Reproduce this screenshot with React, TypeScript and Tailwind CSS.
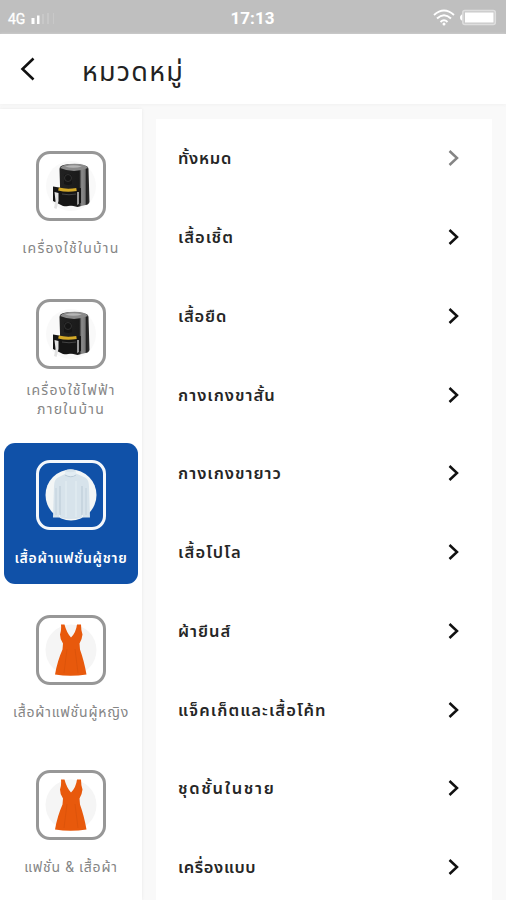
import { clsx } from 'clsx';

type Art = 'fryer' | 'shirt' | 'dress';

const categories: { id: string; lines: string[]; art: Art; box: string; label: string; active?: boolean }[] = [
  { id: 'home', lines: ['เครื่องใช้ในบ้าน'], art: 'fryer', box: 'h-[148px] pt-[42px]', label: 'mt-[18px] tracking-[1.3px]' },
  { id: 'electric', lines: ['เครื่องใช้ไฟฟ้า', 'ภายในบ้าน'], art: 'fryer', box: 'h-[186px] pt-[42px]', label: 'mt-[12px] tracking-[1.3px]' },
  { id: 'men', lines: ['เสื้อผ้าแฟชั่นผู้ชาย'], art: 'shirt', box: 'h-[141px] pt-[17px]', label: 'mt-[19px] font-semibold tracking-[0.75px]', active: true },
  { id: 'women', lines: ['เสื้อผ้าแฟชั่นผู้หญิง'], art: 'dress', box: 'h-[155px] pt-[31px]', label: 'mt-[18px] tracking-[0.8px]' },
  { id: 'fashion', lines: ['แฟชั่น & เสื้อผ้า'], art: 'dress', box: 'h-[155px] pt-[31px]', label: 'mt-[18px] tracking-[0.8px]' },
];

const items = [
  { name: 'ทั้งหมด', tracking: 'tracking-[0.7px]', muted: true },
  { name: 'เสื้อเชิ้ต', tracking: 'tracking-[1px]' },
  { name: 'เสื้อยืด', tracking: 'tracking-[0.8px]' },
  { name: 'กางเกงขาสั้น', tracking: 'tracking-[1px]' },
  { name: 'กางเกงขายาว', tracking: 'tracking-[1px]' },
  { name: 'เสื้อโปโล', tracking: 'tracking-[1.2px]' },
  { name: 'ผ้ายีนส์', tracking: 'tracking-[1px]' },
  { name: 'แจ็คเก็ตและเสื้อโค้ท', tracking: 'tracking-[1.1px]' },
  { name: 'ชุดชั้นในชาย', tracking: 'tracking-[1.7px]' },
  { name: 'เครื่องแบบ', tracking: 'tracking-[0.6px]' },
];

function Fryer() {
  return (
    <svg viewBox="0 0 52 52" className="size-[52px] shrink-0">
      <defs>
        <linearGradient id="fryer-side" x1="0" x2="1">
          <stop offset="0" stopColor="#222" />
          <stop offset=".66" stopColor="#1a1a1a" />
          <stop offset=".74" stopColor="#8c8c8c" />
          <stop offset=".85" stopColor="#777" />
          <stop offset=".9" stopColor="#222" />
          <stop offset="1" stopColor="#333" />
        </linearGradient>
      </defs>
      <circle cx="26" cy="26" r="25" fill="#f9f9f9" />
      <path d="M14.500 9q0-3 4-4 9-2 20 0 5 1 5 4l1 33q-1 3-4 3l-8 2-17-4z" fill="url(#fryer-side)" />
      <path d="M15 8q2-3 9-4 9-1 15 1 3 1 4 3-7 3-14 3t-14-3z" fill="#8a8a8a" />
      <path d="M20 6.500q8-2.500 17 0-9 2.500-17 0z" fill="#b5b5b5" />
      <path d="M19 15q4-2 8 0v9q-4 2-8 0z" fill="#151515" />
      <circle cx="23" cy="18" r="3.500" fill="none" stroke="#383838" strokeWidth=".8" />
      <path d="M8 26.500q14 3 28 1.500v15q-9 4-18 3l-10-5z" fill="#151515" />
      <path d="M13.500 29q8 2 18 .500" fill="none" stroke="#d4a928" strokeWidth="3" />
      <path d="M9.500 32l4 1v8l-2 8-2.500-1 1.500-7z" fill="#e3e3e3" />
      <path d="M32 32h2v12l-2 1z" fill="#999" />
      <path d="M17 34q7 1.500 14 0" fill="none" stroke="#444" />
    </svg>
  );
}

function Shirt() {
  return (
    <svg viewBox="0 0 52 52" className="size-[52px] shrink-0">
      <circle cx="26" cy="26" r="25.500" fill="#f3f6f6" />
      <path d="M20 1.500q5-2.500 11 0v3l9 4q4 2 4 9l1 31h-7l-1-6v6q-11 3-22 0v-6l-1 6H8l1-31q0-7 4-9l8-4z" fill="#d7e3eb" />
      <path d="M20 2q5 2.500 11 0v4q-6 3-11 0z" fill="#e3edf3" />
      <path d="M20 6q6 3.500 11 0M15 17v29M37 17v29" fill="none" stroke="#b5c6d2" strokeWidth=".9" />
      <path d="M21 12v36M31 12v36" stroke="#e1ebf1" strokeWidth="1.500" />
      <path d="M11 19v27M41 19v27" stroke="#c2d1dc" />
    </svg>
  );
}

function Dress() {
  return (
    <svg viewBox="0 0 52 52" className="size-[52px] shrink-0">
      <circle cx="26" cy="26" r="25.500" fill="#f5f5f5" />
      <path d="M16 .500h3.500q2 8 6.500 13 5-5 6-13h4q0 6 1.500 10-.5 5-3 9l.5 6q4 11 6.500 25-16 2.500-31.500 0 2.500-14 7.500-25l.5-6q-3-4-3-9 1.500-4 1-10z" fill="#e8590c" />
      <path d="M22 25l-3 24M30 25l3 24" fill="none" stroke="#d9520a" strokeWidth=".7" />
    </svg>
  );
}

const artwork = { fryer: Fryer, shirt: Shirt, dress: Dress };

function Chevron({ className }: { className?: string }) {
  return (
    <svg viewBox="0 0 12 18" className={clsx('h-[18px] w-3', className)} fill="none" stroke="currentColor" strokeWidth="2.500">
      <path d="M1.500 2L9 9l-7.500 7" />
    </svg>
  );
}

function StatusBar() {
  return (
    <div className="grid h-[34px] grid-cols-3 items-center bg-[#bfbfbf] pl-2 pr-[9px] text-white">
      <div className="flex items-center gap-1 pt-1">
        <span className="text-[14px] leading-none [-webkit-text-stroke:0.3px]">4G</span>
        <svg viewBox="0 0 26 12" className="h-3 w-[26px]" fill="currentColor">
          <path d="M2.500 5h3v6h-3zM8 2.500h2.500V11H8z" />
          <path d="M13 1h2v10h-2zM18 0h2v11h-2zM24 0h1v11h-1z" opacity=".15" />
        </svg>
      </div>
      <div className="pt-[3px] text-center text-[17px] font-bold leading-none">17:13</div>
      <div className="flex items-center justify-end gap-[5px]">
        <svg viewBox="0 0 22 17" className="h-[17px] w-[22px]" fill="none" stroke="currentColor" strokeWidth="1.900">
          <path d="M1 6q10-9 20 0M4 9.500q7-6.500 14 0M7.500 13q3.500-3.500 7 0" />
          <circle cx="11" cy="15" r="1.500" fill="currentColor" stroke="none" />
        </svg>
        <svg viewBox="0 0 37 17" className="h-[17px] w-[37px]">
          <path d="M3 5q-3 1-3 3.500T3 12z" fill="#fff" />
          <rect x="2.800" y="1.500" width="32.500" height="14" rx="2" fill="#c9c9c9" stroke="#dedede" strokeWidth="1.500" />
          <rect x="5" y="3.500" width="28.500" height="10" fill="#fff" />
        </svg>
      </div>
    </div>
  );
}

export default function App() {
  return (
    <div className="flex h-[900px] w-[506px] flex-col overflow-hidden bg-[#f9f9f9] font-[Roboto,'Noto_Sans_Thai','Noto_Sans',sans-serif]">
      <StatusBar />

      <header className="flex h-[70px] shrink-0 items-center bg-white pl-5 shadow-[0_1px_3px_#f1f1f1]">
        <svg viewBox="0 0 16 24" className="h-6 w-4" fill="none" stroke="#111" strokeWidth="2.600">
          <path d="M13.500 1.500L2.500 12l11 10.500" />
        </svg>
        <h1 className="ml-[46px] whitespace-nowrap pt-1.5 text-[27px] leading-8 tracking-[1.2px] text-[#222]">หมวดหมู่</h1>
      </header>

      <div className="flex min-h-0 flex-1 pt-[5px]">
        {/* Category rail */}
        <nav className="w-[142px] shrink-0 bg-white shadow-[0_0_3px_#e8e8e8]">
          {categories.map((c) => {
            const Picture = artwork[c.art];
            return (
              <div
                key={c.id}
                className={clsx(
                  'mx-1 flex w-[134px] flex-col items-center',
                  c.box,
                  c.active ? 'rounded-[11px] bg-[#1051a8] text-white' : 'text-[#858585]',
                )}
              >
                <div
                  className={clsx(
                    'flex size-[70px] shrink-0 items-center justify-center rounded-[14px] border-3',
                    c.active ? 'border-[#f4f7fb]' : 'border-[#979797] bg-white',
                  )}
                >
                  <Picture />
                </div>
                <div className={clsx('whitespace-nowrap text-center text-[14px] leading-[19px]', c.label)}>
                  {c.lines.map((l) => (
                    <div key={l}>{l}</div>
                  ))}
                </div>
              </div>
            );
          })}
        </nav>

        {/* Subcategories */}
        <main className="ml-[14px] mt-[10px] w-[336px] bg-white">
          <ul>
            {items.map((item) => (
              <li key={item.name} className="flex h-[78.750px] items-center justify-between pl-[22px] pr-[32px]">
                <span className={clsx('whitespace-nowrap pt-0.5 text-[16.500px] font-semibold leading-6 text-[#262626]', item.tracking)}>
                  {item.name}
                </span>
                <Chevron className={item.muted ? 'text-[#858585]' : 'text-[#111]'} />
              </li>
            ))}
          </ul>
        </main>
      </div>
    </div>
  );
}
